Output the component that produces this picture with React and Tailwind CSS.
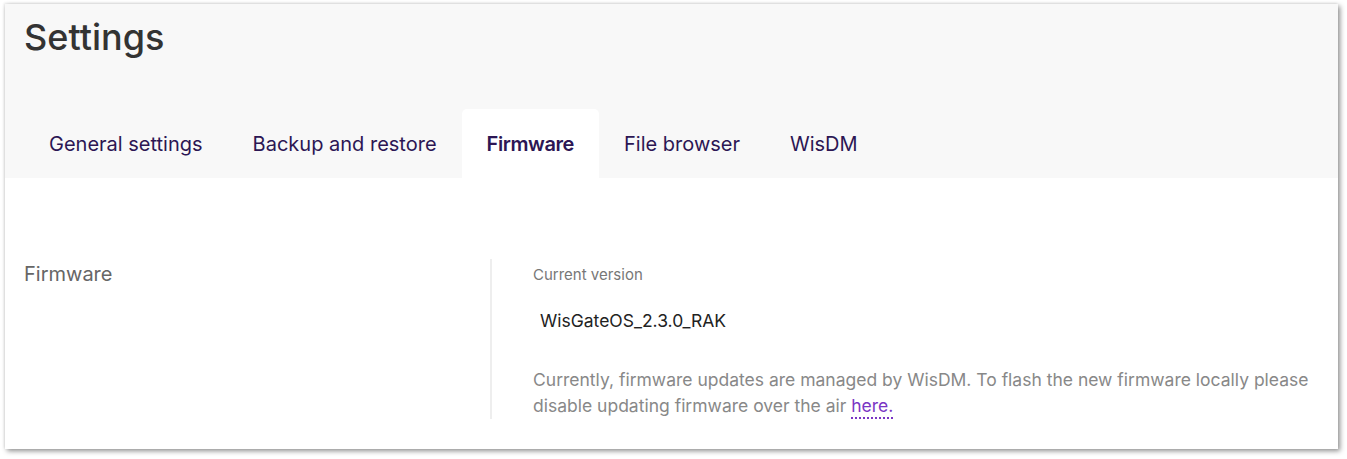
import React, { useState } from 'react';

const tabs = ['General settings', 'Backup and restore', 'Firmware', 'File browser', 'WisDM'];

const App = () => {
  const [activeTab, setActiveTab] = useState('Firmware');

  return (
    <div className="h-[459px] w-[1347px] bg-white pl-[5px] pt-[4px] font-['Inter',sans-serif]">
      <div className="flex h-[445px] w-[1333px] flex-col bg-white shadow-[2px_2px_5px_rgba(0,0,0,0.45),-1px_-1px_2px_rgba(0,0,0,0.08)]">
        {/* Header with title and tabs */}
        <div className="flex h-[174px] flex-col justify-between bg-[#f8f8f8] pl-[19px]">
          <h1 className="pt-[11px] text-[36px] leading-[44px] font-medium text-[#333]">Settings</h1>
          <div className="flex">
            {tabs.map((tab) => (
              <button
                key={tab}
                onClick={() => setActiveTab(tab)}
                className={`h-[69px] rounded-t-[5px] px-[25px] text-[20px] text-[#2c1654] ${
                  activeTab === tab ? 'bg-white font-semibold tracking-[-0.02em]' : 'font-normal'
                }`}
              >
                {tab}
              </button>
            ))}
          </div>
        </div>

        {/* Firmware section */}
        <div className="flex pt-[81px] pl-[19px] pr-[20px]">
          <div className="w-[466px] text-[20px] leading-[30px] text-[#666]">Firmware</div>
          <div className="flex-1 border-l-2 border-[#eeeeee] pl-[41px] pt-[6px]">
            <div className="text-[15px] leading-[20px] text-[#777]">Current version</div>
            <div className="mt-[22px] pl-[7px] text-[17.5px] leading-[28px] text-[#222]">WisGateOS_2.3.0_RAK</div>
            <p className="mt-[32px] text-[17.5px] leading-[26px] text-[#888]">
              Currently, firmware updates are managed by WisDM. To flash the new firmware locally please disable
              updating firmware over the air{' '}
              <a href="#" className="border-b-2 border-dotted border-[#7a35c4] pb-[1px] text-[#7a35c4]">
                here.
              </a>
            </p>
          </div>
        </div>
      </div>
    </div>
  );
};

export default App;
